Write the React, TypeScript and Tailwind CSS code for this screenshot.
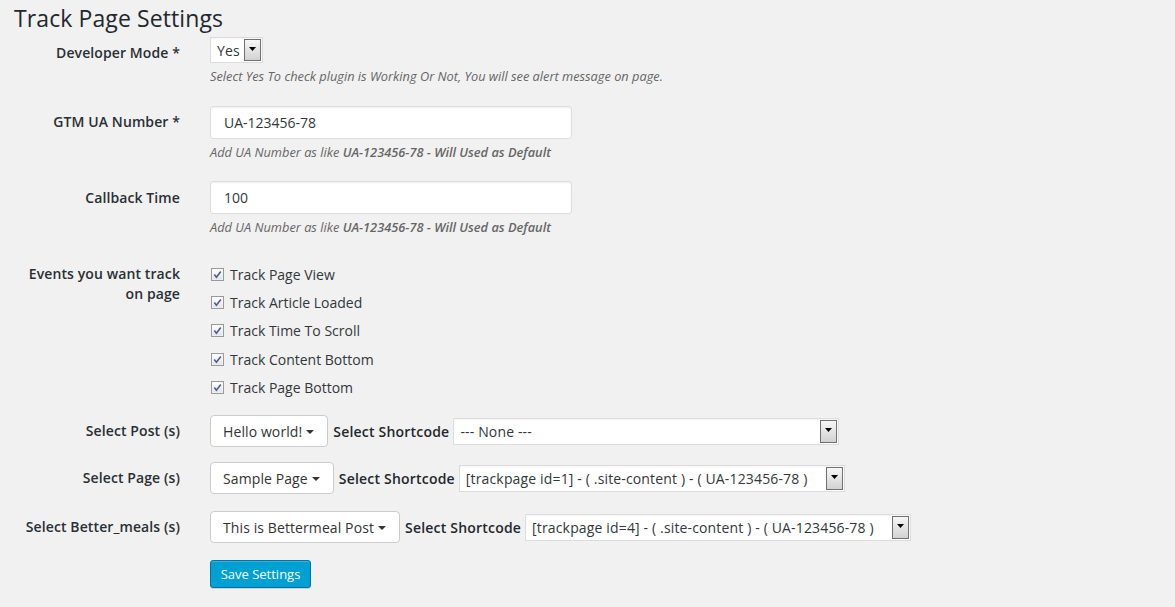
import React from "react";

function Arrow() {
  return (
    <div className="my-[1px] mr-[1px] flex w-[17px] items-start justify-center self-stretch border border-[#6f6f6f] bg-gradient-to-b from-[#f6f6f6] to-[#d2d2d2] pt-[7px]">
      <svg width="7" height="4" viewBox="0 0 7 4">
        <path d="M0 0h7L3.5 4z" fill="#000" />
      </svg>
    </div>
  );
}

function NativeSelect({ value, width, height, pad }: { value: string; width: string; height: string; pad: string }) {
  return (
    <div className={`flex ${width} ${height} border border-[#dcdcdc] bg-white text-[14px] text-[#32373c] shadow-[inset_0_1px_2px_rgba(0,0,0,0.04)]`}>
      <div className={`flex flex-1 items-center ${pad} whitespace-nowrap tracking-[0.15px]`}>{value}</div>
      <Arrow />
    </div>
  );
}

function Caret() {
  return (
    <svg width="8" height="4" viewBox="0 0 8 4" className="ml-[4px] mt-[1px]">
      <path d="M0 0h8L4 4z" fill="#333" />
    </svg>
  );
}

function DropButton({ text }: { text: string }) {
  return (
    <div className="flex h-[32px] items-center rounded-[4px] border border-[#cccccc] bg-white pl-[12px] pr-[13px] text-[14px] text-[#333] whitespace-nowrap tracking-[0.1px]">
      {text}
      <Caret />
    </div>
  );
}

function Label({ children, pt }: { children: React.ReactNode; pt: string }) {
  return (
    <div className={`w-[180px] shrink-0 pl-[21px] text-right text-[14px] font-semibold leading-[20px] text-[#2a2f34] tracking-[0.1px] ${pt}`}>
      {children}
    </div>
  );
}

function Desc({ children }: { children: React.ReactNode }) {
  return <p className="mt-[4px] text-[12.8px] italic leading-[18px] text-[#666]">{children}</p>;
}

function UADesc() {
  return (
    <Desc>
      Add UA Number as like <span className="font-semibold">UA-123456-78 - Will Used as Default</span>
    </Desc>
  );
}

function TextInput({ value }: { value: string }) {
  return (
    <div className="flex h-[33px] w-[362px] items-center rounded-[3px] border border-[#dddddd] bg-white pl-[13px] text-[14px] text-[#32373c] shadow-[inset_0_1px_2px_rgba(0,0,0,0.07)]">
      {value}
    </div>
  );
}

function CheckBox() {
  return (
    <svg width="13" height="13" viewBox="0 0 13 13" className="mr-[6px] shrink-0">
      <defs>
        <linearGradient id="g" x1="0" y1="0" x2="0" y2="1">
          <stop offset="0" stopColor="#ffffff" />
          <stop offset="1" stopColor="#e4e4e4" />
        </linearGradient>
      </defs>
      <rect x="0.5" y="0.5" width="12" height="12" fill="#f7f7f7" stroke="#9a9a9a" />
      <rect x="1.5" y="1.5" width="10" height="10" fill="url(#g)" />
      <path d="M3.3 6.6 L5.4 9.2 L9.8 3.4" fill="none" stroke="#4d5a9a" strokeWidth="1.6" />
    </svg>
  );
}

function ShortcodeRow({ btn, value }: { btn: string; value: string }) {
  return (
    <div className="flex items-center">
      <DropButton text={btn} />
      <span className="ml-[5px] mr-[4px] text-[14px] font-semibold text-[#23282d] whitespace-nowrap tracking-[0.2px]">Select Shortcode</span>
      <NativeSelect value={value} width="w-[386px]" height="h-[27px]" pad="pl-[6px]" />
    </div>
  );
}

export default function App() {
  const events = [
    "Track Page View",
    "Track Article Loaded",
    "Track Time To Scroll",
    "Track Content Bottom",
    "Track Page Bottom",
  ];
  return (
    <div className="min-h-screen bg-[#f1f1f1] font-['Open_Sans',sans-serif] text-[#23282d]">
      <h2 className="pl-[14px] pt-[4px] text-[23px] font-normal leading-[29px] tracking-[0.1px] text-[#23282d]">Track Page Settings</h2>

      <div className="mt-[4px] flex">
        <Label pt="pt-[6px]">Developer Mode *</Label>
        <div className="ml-[30px]">
          <NativeSelect value="Yes" width="w-[53px]" height="h-[26px]" pad="pl-[6px]" />
          <Desc>Select Yes To check plugin is Working Or Not, You will see alert message on page.</Desc>
        </div>
      </div>

      <div className="mt-[21px] flex">
        <Label pt="pt-[6px]">GTM UA Number *</Label>
        <div className="ml-[30px]">
          <TextInput value="UA-123456-78" />
          <UADesc />
        </div>
      </div>

      <div className="mt-[20px] flex">
        <Label pt="pt-[7px]">Callback Time</Label>
        <div className="ml-[30px]">
          <TextInput value="100" />
          <UADesc />
        </div>
      </div>

      <div className="mt-[24px] flex">
        <Label pt="pt-[4px]">Events you want track on page</Label>
        <div className="ml-[31px] flex flex-col">
          {events.map((e) => (
            <div key={e} className="flex h-[28.3px] items-center text-[14px] text-[#32373c]">
              <CheckBox />
              {e}
            </div>
          ))}
        </div>
      </div>

      <div className="mt-[14px] flex items-center">
        <Label pt="pt-0">Select Post (s)</Label>
        <div className="ml-[30px]">
          <ShortcodeRow btn="Hello world!" value="--- None ---" />
        </div>
      </div>

      <div className="mt-[15px] flex items-center">
        <Label pt="pt-0">Select Page (s)</Label>
        <div className="ml-[30px]">
          <ShortcodeRow btn="Sample Page" value="[trackpage id=1] - ( .site-content ) - ( UA-123456-78 )" />
        </div>
      </div>

      <div className="mt-[17px] flex items-center">
        <Label pt="pt-0">Select Better_meals (s)</Label>
        <div className="ml-[30px]">
          <ShortcodeRow btn="This is Bettermeal Post" value="[trackpage id=4] - ( .site-content ) - ( UA-123456-78 )" />
        </div>
      </div>

      <div className="mt-[17px] flex">
        <div className="w-[180px] shrink-0" />
        <button className="ml-[30px] h-[28px] w-[101px] rounded-[3px] border border-[#0073aa] bg-[#00a0d2] text-[13px] text-white shadow-[inset_0_1px_0_#33b3db,0_1px_0_rgba(0,0,0,0.15)]">
          Save Settings
        </button>
      </div>
    </div>
  );
}
